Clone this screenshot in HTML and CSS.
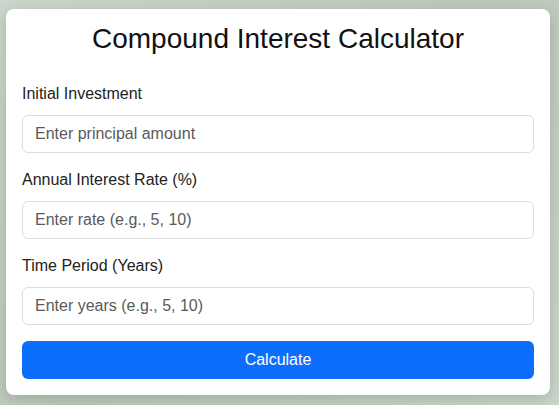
FILE: index.html
```html
<!DOCTYPE html>
<html lang="en">
<head>
<meta charset="utf-8">
<title>Compound Interest Calculator</title>
<link rel="stylesheet" href="styles.css">
</head>
<body>
  <div class="card">
    <h1 class="title">Compound Interest Calculator</h1>
    <div class="group">
      <label class="label" for="p">Initial Investment</label>
      <input class="field" id="p" type="text" placeholder="Enter principal amount">
    </div>
    <div class="group">
      <label class="label" for="r">Annual Interest Rate (%)</label>
      <input class="field" id="r" type="text" placeholder="Enter rate (e.g., 5, 10)">
    </div>
    <div class="group">
      <label class="label" for="t">Time Period (Years)</label>
      <input class="field" id="t" type="text" placeholder="Enter years (e.g., 5, 10)">
    </div>
    <button class="btn" type="button">Calculate</button>
  </div>
</body>
</html>
```

FILE: styles.css
```css
html, body {
  margin: 0;
  height: 100%;
}
body {
  font-family: "Liberation Sans", Arial, sans-serif;
  background: linear-gradient(135deg, #ccd6cc 0%, #bcc8bc 50%, #ccd6cc 100%);
  padding: 9px 0 0 6px;
  box-sizing: border-box;
}
.card {
  width: 544px;
  box-sizing: border-box;
  background: #fff;
  border-radius: 8px;
  box-shadow: 0 4px 14px rgba(60, 80, 60, 0.25);
  padding: 14px 16px 16px;
  display: flex;
  flex-direction: column;
}
.title {
  margin: 0 0 30px;
  font-size: 28px;
  font-weight: normal;
  line-height: 32px;
  text-align: center;
  color: #111;
}
.group {
  display: flex;
  flex-direction: column;
  margin-bottom: 18px;
}
.group:nth-last-of-type(1) {
  margin-bottom: 16px;
}
.label {
  font-size: 16px;
  line-height: 18px;
  color: #222;
  margin-bottom: 12px;
}
.field {
  height: 38px;
  box-sizing: border-box;
  border: 1px solid #dcdcdc;
  border-radius: 6px;
  padding: 0 12px;
  font-family: inherit;
  font-size: 16px;
  color: #222;
  outline: none;
}
.field::placeholder {
  color: #5a5a5a;
}
.btn {
  height: 38px;
  border: none;
  border-radius: 6px;
  background: #0d6efd;
  color: #fff;
  font-family: inherit;
  font-size: 16px;
}
```
